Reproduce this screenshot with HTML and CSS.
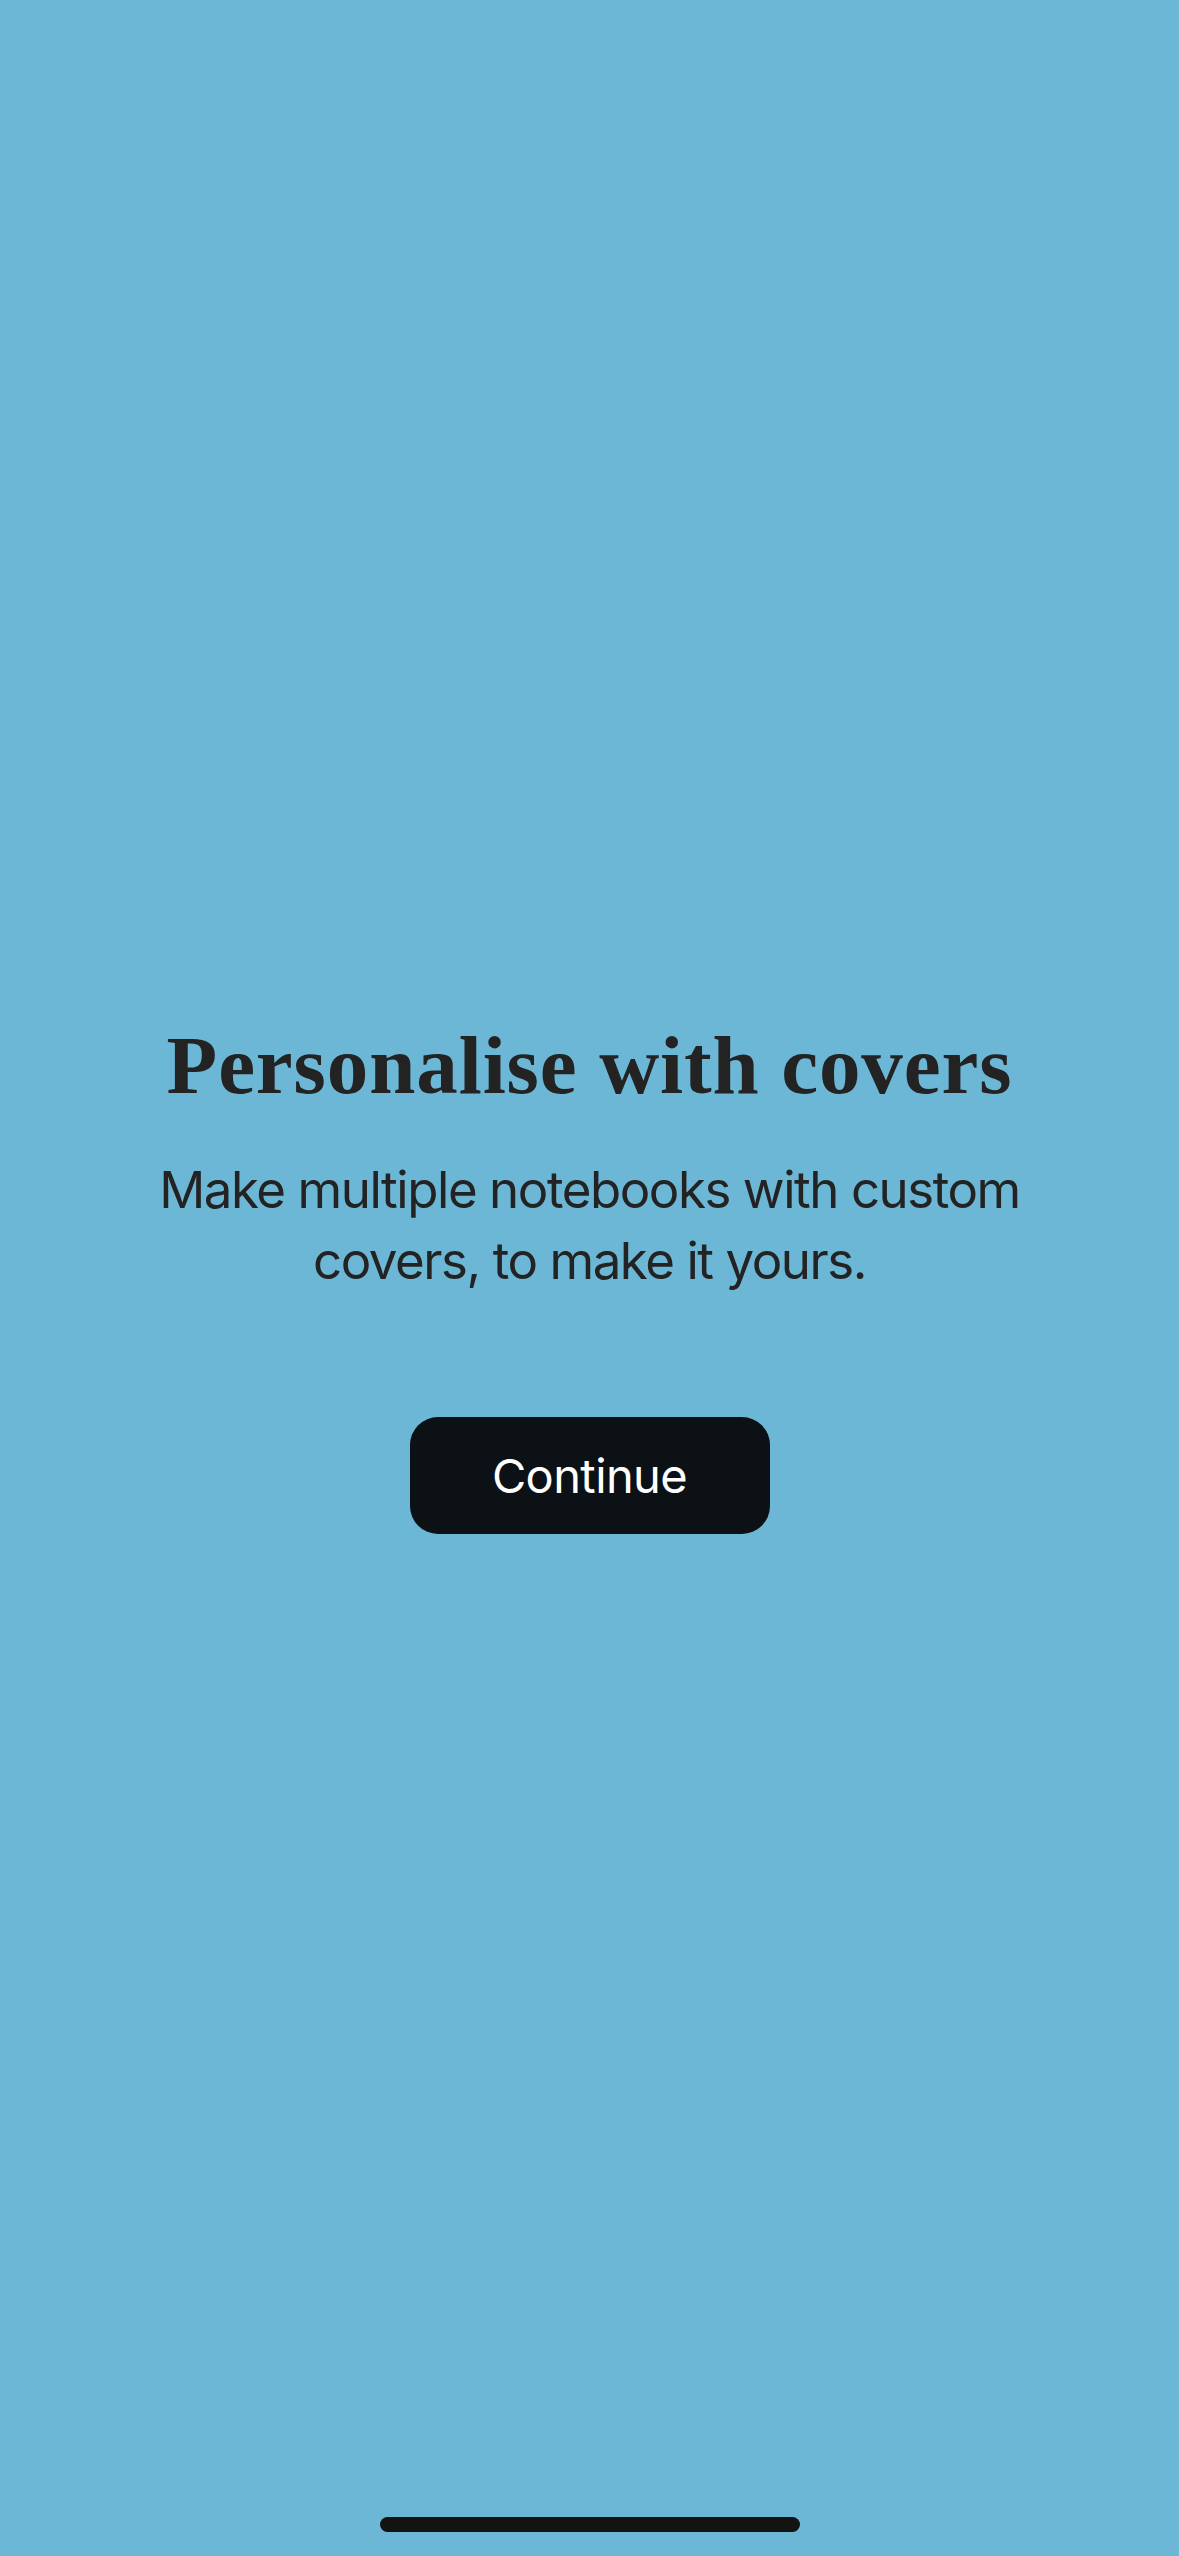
FILE: index.html
```html
<!DOCTYPE html>
<html lang="en">
<head>
<meta charset="utf-8">
<title>Personalise with covers</title>
<link rel="stylesheet" href="styles.css">
</head>
<body>
<main class="screen">
  <section class="intro">
    <h1 class="title">Personalise with covers</h1>
    <p class="subtitle">Make multiple notebooks with custom covers, to make it yours.</p>
    <button class="continue" type="button">Continue</button>
  </section>
  <div class="home-indicator"></div>
</main>
</body>
</html>
```

FILE: styles.css
```css
html, body {
  margin: 0;
  padding: 0;
}

body {
  background: #6db7d6;
  color: #232323;
  font-family: Inter, "Noto Sans", "Liberation Sans", sans-serif;
}

.screen {
  position: relative;
  min-height: 2556px;
  display: flex;
  flex-direction: column;
  align-items: center;
  justify-content: center;
  box-sizing: border-box;
  padding-bottom: 8px;
}

.intro {
  display: flex;
  flex-direction: column;
  align-items: center;
  text-align: center;
}

.title {
  margin: 0;
  font-family: "Liberation Serif", "Times New Roman", serif;
  font-weight: 700;
  font-size: 83px;
  line-height: 100px;
  letter-spacing: 0.9px;
  color: #232323;
}

.subtitle {
  margin: 39px 0 0;
  width: 960px;
  font-size: 51px;
  line-height: 71px;
  font-weight: 400;
  letter-spacing: -1.45px;
  color: #232323;
}

.continue {
  margin-top: 121px;
  width: 360px;
  height: 117px;
  border: none;
  border-radius: 28px;
  background: #0b1115;
  color: #ffffff;
  font-family: Inter, "Noto Sans", "Liberation Sans", sans-serif;
  font-size: 47px;
  font-weight: 400;
  letter-spacing: -0.6px;
  padding: 0;
}

.home-indicator {
  position: absolute;
  left: 380px;
  bottom: 24px;
  width: 420px;
  height: 15px;
  border-radius: 8px;
  background: #131313;
}
```
